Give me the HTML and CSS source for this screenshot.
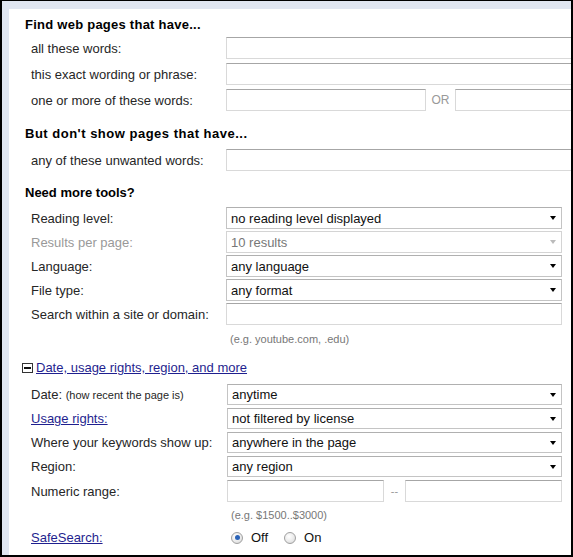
FILE: index.html
```
<!DOCTYPE html>
<html>
<head>
<meta charset="utf-8">
<link rel="stylesheet" href="styles.css">
</head>
<body>
<div class="frame">
  <div class="page">
    <h2 class="heading h1">Find web pages that have...</h2>
    <div class="rows r1">
      <div class="row"><span class="lbl">all these words:</span><span class="input wide"></span></div>
      <div class="row"><span class="lbl">this exact wording or phrase:</span><span class="input wide"></span></div>
      <div class="row"><span class="lbl">one or more of these words:</span><span class="field-or"><span class="input half"></span><span class="or">OR</span><span class="input wide"></span></span></div>
    </div>

    <h2 class="heading h2">But don't show pages that have...</h2>
    <div class="rows r2">
      <div class="row"><span class="lbl">any of these unwanted words:</span><span class="input wide"></span></div>
    </div>

    <h2 class="heading h3">Need more tools?</h2>
    <div class="rows r3">
      <div class="row"><span class="lbl">Reading level:</span><span class="select"><span class="val">no reading level displayed</span><span class="arrow"></span></span></div>
      <div class="row"><span class="lbl disabled">Results per page:</span><span class="select off"><span class="val">10 results</span><span class="arrow"></span></span></div>
      <div class="row"><span class="lbl">Language:</span><span class="select"><span class="val">any language</span><span class="arrow"></span></span></div>
      <div class="row"><span class="lbl">File type:</span><span class="select"><span class="val">any format</span><span class="arrow"></span></span></div>
      <div class="row"><span class="lbl">Search within a site or domain:</span><span class="input box"></span></div>
    </div>
    <div class="hint h-site">(e.g. youtube.com, .edu)</div>

    <div class="toggle"><span class="minus"></span><a class="link" href="#">Date, usage rights, region, and more</a></div>

    <div class="rows r4">
      <div class="row"><span class="lbl">Date: <small>(how recent the page is)</small></span><span class="select s2"><span class="val">anytime</span><span class="arrow"></span></span></div>
      <div class="row"><span class="lbl"><a class="link" href="#">Usage rights:</a></span><span class="select s2"><span class="val">not filtered by license</span><span class="arrow"></span></span></div>
      <div class="row"><span class="lbl">Where your keywords show up:</span><span class="select s2"><span class="val">anywhere in the page</span><span class="arrow"></span></span></div>
      <div class="row"><span class="lbl">Region:</span><span class="select s2"><span class="val">any region</span><span class="arrow"></span></span></div>
      <div class="row tall"><span class="lbl">Numeric range:</span><span class="range"><span class="input num"></span><span class="dash">--</span><span class="input num"></span></span></div>
    </div>
    <div class="hint h-num">(e.g. $1500..$3000)</div>

    <div class="row safe"><span class="lbl"><a class="link" href="#">SafeSearch:</a></span><span class="radios"><span class="radio on"></span><span class="rtext">Off</span><span class="radio"></span><span class="rtext">On</span></span></div>
  </div>
</div>
</body>
</html>
```
FILE: styles.css
```
html, body {
  margin: 0;
  padding: 0;
  background: #fff;
}
.frame {
  width: 573px;
  height: 557px;
  box-sizing: border-box;
  border-style: solid;
  border-color: #000;
  border-width: 1px 2px 2px 2px;
  background: #e0e6f1;
  padding: 8px 0 0 7px;
  overflow: hidden;
  font-family: "Liberation Sans", Arial, sans-serif;
  font-size: 13px;
  color: #222;
}
.page {
  background: #fff;
  height: 100%;
  box-sizing: border-box;
  padding-left: 16px;
  overflow: hidden;
  display: flex;
  flex-direction: column;
}
.heading {
  margin: 0;
  font-size: 13px;
  line-height: 15px;
  font-weight: bold;
  color: #000;
  white-space: nowrap;
}
.h1 { margin-top: 8px; letter-spacing: 0.25px; }
.h2 { margin-top: 15px; letter-spacing: 0.5px; }
.h3 { margin-top: 14px; }
.rows {
  display: flex;
  flex-direction: column;
  gap: 4px;
  padding-left: 6px;
}
.r1 { margin-top: 5px; }
.r2 { margin-top: 8px; }
.r3 { margin-top: 7px; gap: 2px; }
.r4 { margin-top: 9px; gap: 3px; }
.row {
  display: flex;
  align-items: center;
  height: 22px;
}
.r4 .row { height: 21px; }
.r4 .row.tall { height: 22px; }
.lbl {
  flex: 0 0 195px;
  white-space: nowrap;
  color: #262626;
}
.lbl small { font-size: 11px; }
.lbl.disabled { color: #999; }
.input {
  display: block;
  box-sizing: border-box;
  height: 22px;
  background: #fff;
  border: 1px solid #d9d9d9;
  border-top-color: #a6a6a6;
  flex: none;
}
.input.wide { width: 400px; }
.input.half { width: 200px; }
.input.box { width: 336px; }
.input.num { width: 157px; }
.field-or, .range {
  display: flex;
  align-items: center;
}
.or {
  width: 29px;
  text-align: center;
  color: #999;
  font-size: 12px;
}
.dash {
  width: 21px;
  text-align: center;
  color: #999;
  font-size: 11px;
}
.range { margin-left: 1px; }
.select {
  box-sizing: border-box;
  width: 336px;
  height: 100%;
  border: 1px solid #c4c4c4;
  border-top-color: #b0b0b0;
  display: flex;
  align-items: center;
  justify-content: space-between;
  padding: 0 5px 0 4px;
  background: #fff;
}
.select.s2 { width: 335px; margin-left: 1px; }
.select .val { color: #111; white-space: nowrap; }
.arrow {
  width: 0;
  height: 0;
  border-left: 3.5px solid transparent;
  border-right: 3.5px solid transparent;
  border-top: 4px solid #000;
}
.select.off { border-color: #d4d4d4; }
.select.off .val { color: #777; }
.select.off .arrow { border-top-color: #bbb; }
.hint {
  font-size: 11px;
  line-height: 13px;
  color: #777;
  padding-left: 205px;
}
.h-site { margin-top: 8px; }
.h-num { margin-top: 7px; padding-left: 206px; }
.toggle {
  margin-top: 14px;
  display: flex;
  align-items: center;
  height: 15px;
}
.minus {
  position: relative;
  width: 11px;
  height: 10px;
  box-sizing: border-box;
  border: 1px solid #333;
  background: #fff;
  margin-left: -3px;
  margin-right: 3px;
}
.minus::after {
  content: "";
  position: absolute;
  left: 1px;
  right: 1px;
  top: 3px;
  height: 2px;
  background: #111;
}
.link {
  color: #1f1f8f;
  text-decoration: underline;
}
.safe {
  margin-top: 8px;
  padding-left: 6px;
  height: 15px;
}
.radios {
  display: flex;
  align-items: center;
  padding-left: 5px;
}
.radio {
  width: 12px;
  height: 12px;
  box-sizing: border-box;
  border-radius: 50%;
  border: 1px solid #a0a0a0;
  background: radial-gradient(circle at 40% 35%, #fff 0%, #e8e8e8 60%, #cfcfcf 100%);
  position: relative;
}
.radio.on::after {
  content: "";
  position: absolute;
  left: 2.5px;
  top: 2.5px;
  width: 5px;
  height: 5px;
  border-radius: 50%;
  background: #2a63b8;
}
.rtext { margin-left: 8px; margin-right: 16px; color: #111; }
```
